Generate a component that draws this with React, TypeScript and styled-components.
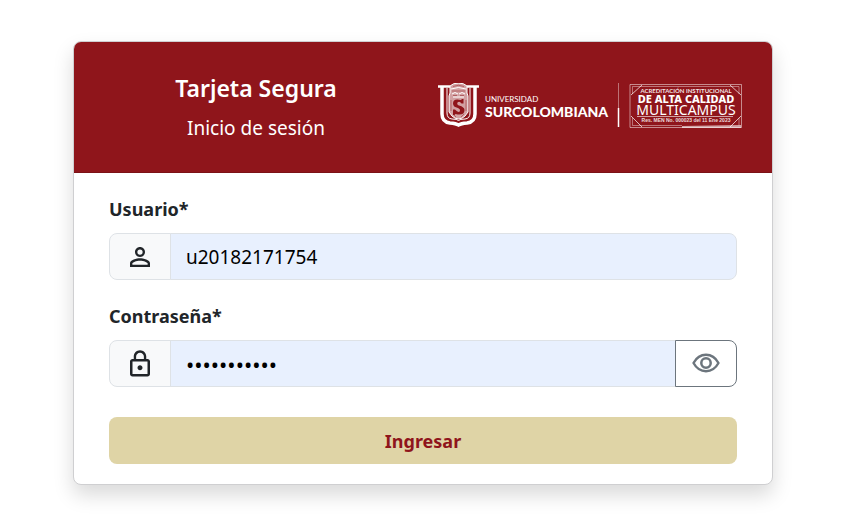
import React, { useState } from "react";
import styled, { createGlobalStyle } from "styled-components";
import { MdLockOutline, MdPersonOutline } from "react-icons/md";

const GlobalStyle = createGlobalStyle`
  *, *::before, *::after { box-sizing: border-box; }
  body {
    margin: 0;
    background: #fff;
    color: #212529;
    font-family: "Segoe UI", "Noto Sans", sans-serif;
    font-size: 19px;
    line-height: 30px;
  }
`;

const Page = styled.main`
  display: flex;
  justify-content: center;
  padding: 41px 24px;
`;

const Card = styled.section`
  width: 100%;
  max-width: 700px;
  overflow: hidden;
  background: #fff;
  border: 1px solid #cfcfd1;
  border-radius: 8px;
  box-shadow: 0 10px 20px rgba(0, 0, 0, 0.15);
`;

const CardHeader = styled.header`
  display: grid;
  grid-template-columns: 1fr 1fr;
  align-items: center;
  padding: 31px 15px 29px;
  background: #8f151b;
  border-bottom: 1px solid #7b1217;
  color: #fff;
`;

const Titles = styled.div`
  display: grid;
  gap: 10px;
  text-align: center;
`;

const Title = styled.h1`
  margin: 0;
  font-size: 23px;
  font-weight: 600;
  line-height: 30px;
`;

const Subtitle = styled.p`
  margin: 0;
`;

const Brand = styled.div`
  padding: 0 15px 4px;
`;

const BrandSvg = styled.svg`
  display: block;
  width: 100%;
  height: auto;
`;

const Form = styled.form`
  display: grid;
  gap: 21px;
  padding: 21px 35px 20px;
`;

const Field = styled.div`
  display: grid;
  gap: 9px;
`;

const Label = styled.label`
  font-size: 18px;
  font-weight: 700;
`;

const InputGroup = styled.div`
  display: flex;
  height: 47px;
`;

const Addon = styled.span`
  display: flex;
  align-items: center;
  justify-content: center;
  width: 62px;
  background: #f8f9fa;
  border: 1px solid #dee2e6;
  border-radius: 8px 0 0 8px;
`;

const Input = styled.input<{ $last?: boolean }>`
  flex: 1;
  min-width: 0;
  margin-left: -1px;
  padding: 0 15px;
  background: #e8f0fe;
  border: 1px solid #dee2e6;
  border-radius: ${(p) => (p.$last ? "0 8px 8px 0" : "0")};
  color: #000;
  font: inherit;
  outline: none;

  &[type="password"] {
    font-size: 22px;
  }
`;

const RevealButton = styled.button`
  display: flex;
  align-items: center;
  justify-content: center;
  width: 62px;
  margin-left: -1px;
  padding: 0;
  background: #fff;
  border: 1px solid #6c757d;
  border-radius: 0 8px 8px 0;
  color: #6c757d;
  cursor: pointer;
`;

const SubmitButton = styled.button`
  height: 47px;
  margin-top: 9px;
  background: #dfd4a6;
  border: 0;
  border-radius: 8px;
  color: #8f151b;
  font: inherit;
  font-size: 18px;
  font-weight: 700;
  cursor: pointer;
`;

function EyeIcon() {
  return (
    <svg width="30" height="30" viewBox="0 0 30 30" fill="none" stroke="currentColor" aria-hidden>
      <path d="M2.500 14Q7 5.800 15 5.800Q23 5.800 27.500 14Q23 22.200 15 22.200Q7 22.200 2.500 14Z" strokeWidth="2.400" strokeLinejoin="round" />
      <circle cx="15" cy="14" r="4.700" strokeWidth="2.500" />
    </svg>
  );
}

function UniversityLogo() {
  return (
    <BrandSvg viewBox="0 0 304 46" role="img" aria-label="Universidad Surcolombiana, acreditación institucional de alta calidad multicampus">
      <g fill="none" stroke="#fff">
        <path d="M0 3.500h12M29 3.500h12" strokeWidth="2.500" />
        <path d="M4 4v27Q4 39 12 40Q18 40.500 20.500 42Q23 40.500 29 40Q37 39 37 31V4" strokeWidth="3.500" />
        <path d="M9 5v25Q9 35.500 14 36Q19 36 20.500 37.500Q22 36 27 36Q32 35.500 32 30V5" strokeWidth="1" />
      </g>
      <path d="M12 3Q15 0 20.500 0Q26 0 29 3V10L30 13V29L27 33Q24 36 20.500 36Q17 36 14 33L11 29V13L12 10Z" fill="#fff" fillOpacity="0.600" />
      <path d="M12 3Q15 0 20.500 0Q26 0 29 3V10L30 13V29L27 33Q24 36 20.500 36Q17 36 14 33L11 29V13L12 10ZM13 6Q20.500 3 28 6M14 11q3-3 6 0M21 11q3-3 6 0M15 14h11" fill="none" stroke="#fff" />
      <g fill="none" stroke="#8f151b" strokeWidth="0.800" strokeOpacity="0.600">
        <path d="M15 3.500Q20.500 1 26 3.500M14 8h13M15 12.500h4M22 12.500h4M13 17v11M28 17v11M15 31l3 3M26 31l-3 3" />
      </g>
      <path d="M25.500 20.500V16H24L23 17Q15 15 15 20.500Q15 24 20 25Q22.500 26 22 28Q20.500 30.500 17 26.500H15V32H16.500L17.500 31Q26.500 33 26.500 27Q26.500 24 21 22.500Q18.500 21.500 19.500 19.500Q21.500 17.500 23.500 20.500Z" fill="#8f151b" />
      <g fill="#fff" fontFamily="Lato, sans-serif">
        <text x="47" y="19" fontSize="8">UNIVERSIDAD</text>
        <text x="47" y="34" fontSize="14" fontWeight="900">SURCOLOMBIANA</text>
      </g>
      <path d="M180.500 0v25" stroke="#fff" strokeOpacity="0.400" />
      <path d="M180.500 25v19" stroke="#fff" strokeWidth="1.500" />
      <g fill="none" stroke="#fff">
        <path d="M192 1.500h111.500v43H192Z" strokeOpacity="0.500" />
        <path d="M194.500 11V3.500H301V11M194.500 35v7.500H244M301 35v7.500" strokeOpacity="0.400" />
        <path d="M193 12L204 2M303 12L292 2M193 33L204 44M303 33L292 44" strokeOpacity="0.700" />
        <path d="M199 33.500h96" strokeOpacity="0.600" />
      </g>
      <path d="M244 43L303 42V45H244Z" fill="#fff" fillOpacity="0.600" />
      <g fill="#fff" textAnchor="middle">
        <text x="248" y="10" fontFamily="Lato, sans-serif" fontSize="6" fontWeight="700" fillOpacity="0.900">ACREDITACIÓN INSTITUCIONAL</text>
        <text x="248" y="20" fontFamily="Noto Sans, sans-serif" fontSize="11" fontWeight="800">DE ALTA CALIDAD</text>
        <text x="248" y="32" fontFamily="Noto Sans, sans-serif" fontSize="14">MULTICAMPUS</text>
        <text x="248" y="39" fontFamily="Liberation Sans, sans-serif" fontSize="5" fontWeight="700" fillOpacity="0.850">Res. MEN No. 000023 del 11 Ene 2023</text>
      </g>
    </BrandSvg>
  );
}

export default function App() {
  const [user, setUser] = useState("u20182171754");
  const [password, setPassword] = useState("contrasena1");
  const [visible, setVisible] = useState(false);

  return (
    <>
      <GlobalStyle />
      <Page>
        <Card>
          <CardHeader>
            <Titles>
              <Title>Tarjeta Segura</Title>
              <Subtitle>Inicio de sesión</Subtitle>
            </Titles>
            <Brand>
              <UniversityLogo />
            </Brand>
          </CardHeader>
          <Form onSubmit={(e) => e.preventDefault()}>
            <Field>
              <Label htmlFor="user">Usuario*</Label>
              <InputGroup>
                <Addon>
                  <MdPersonOutline size={30} aria-hidden />
                </Addon>
                <Input id="user" $last value={user} onChange={(e) => setUser(e.target.value)} />
              </InputGroup>
            </Field>
            <Field>
              <Label htmlFor="password">Contraseña*</Label>
              <InputGroup>
                <Addon>
                  <MdLockOutline size={30} aria-hidden />
                </Addon>
                <Input
                  id="password"
                  type={visible ? "text" : "password"}
                  value={password}
                  onChange={(e) => setPassword(e.target.value)}
                />
                <RevealButton type="button" aria-label="Mostrar contraseña" onClick={() => setVisible(!visible)}>
                  <EyeIcon />
                </RevealButton>
              </InputGroup>
            </Field>
            <SubmitButton type="submit">Ingresar</SubmitButton>
          </Form>
        </Card>
      </Page>
    </>
  );
}
